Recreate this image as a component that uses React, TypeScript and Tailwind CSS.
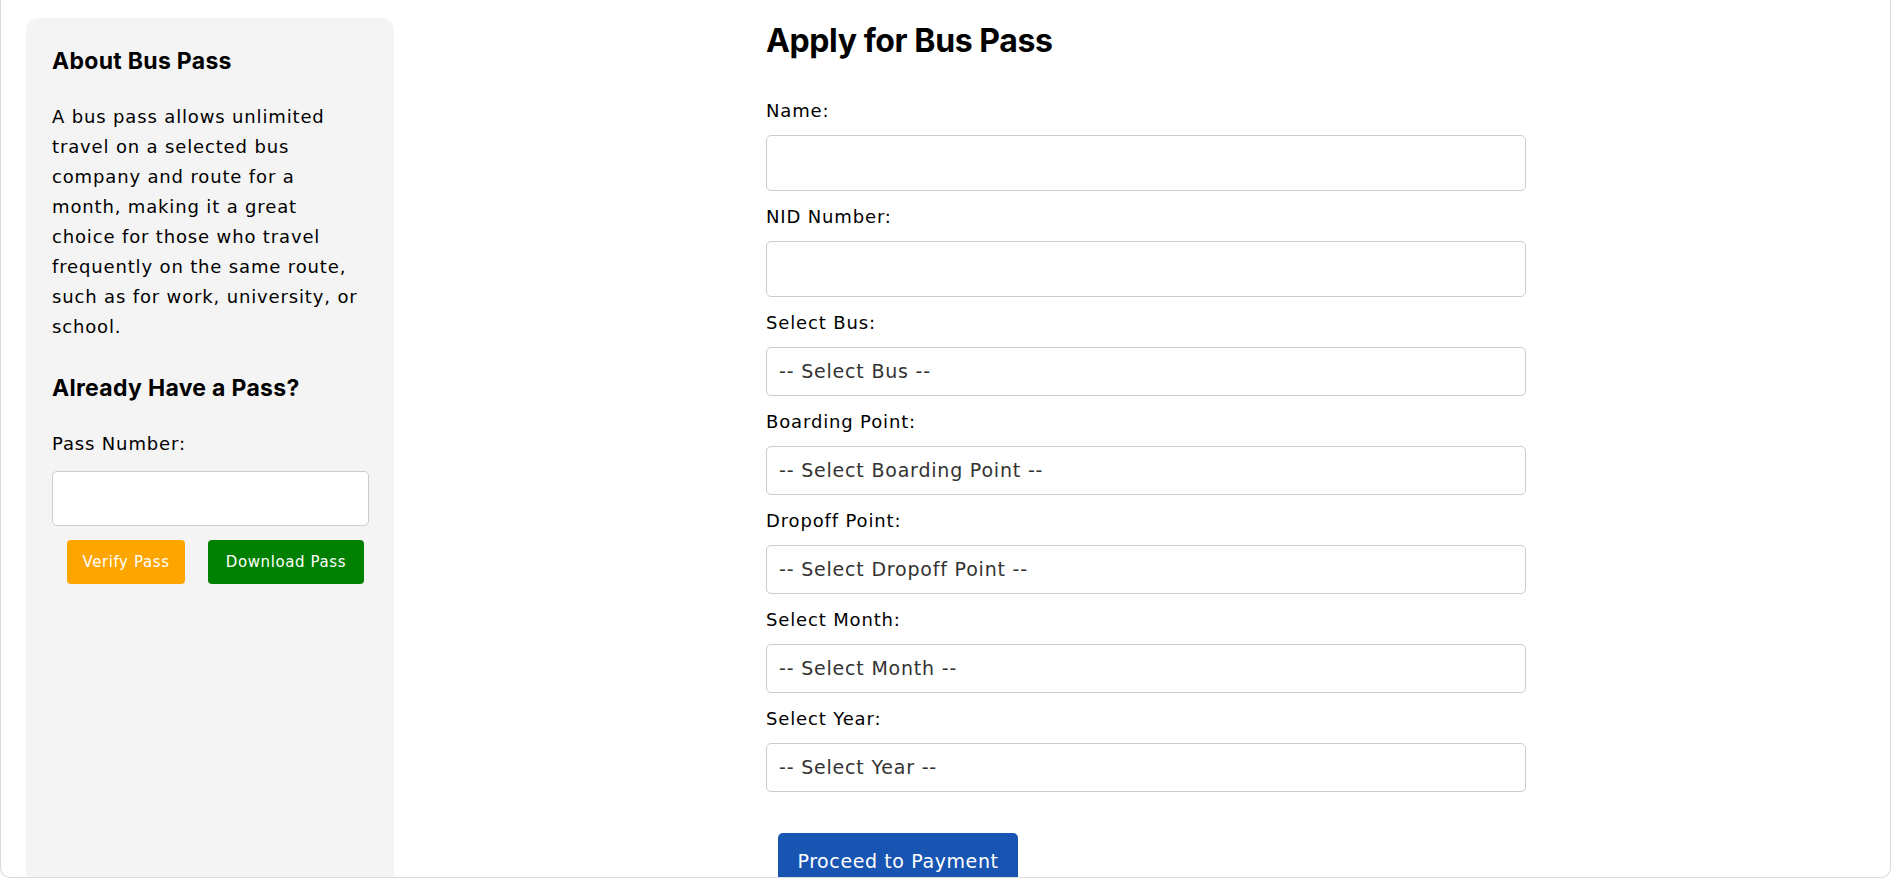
import { useState } from "react";

const fields = [
  { label: "Name:", type: "input" },
  { label: "NID Number:", type: "input" },
  { label: "Select Bus:", type: "select", placeholder: "-- Select Bus --" },
  { label: "Boarding Point:", type: "select", placeholder: "-- Select Boarding Point --" },
  { label: "Dropoff Point:", type: "select", placeholder: "-- Select Dropoff Point --" },
  { label: "Select Month:", type: "select", placeholder: "-- Select Month --" },
  { label: "Select Year:", type: "select", placeholder: "-- Select Year --" },
];

export default function App() {
  const [passNo, setPassNo] = useState("");

  return (
    <div className="w-full h-[880px] bg-white font-['DejaVu_Sans',sans-serif] text-black">
      <div className="h-[878px] border-x border-b border-[#dcdcdc] rounded-b-[10px] overflow-hidden flex">
        {/* --- Sidebar --- */}
        <aside className="w-[368px] shrink-0 ml-[25px] mt-[18px] bg-[#f4f4f4] rounded-t-[12px] pl-[26px] pr-[25px] pt-[28px]">
          <h3 className="font-['Inter',sans-serif] text-[23px] leading-[30px] font-bold tracking-[0.3px]">About Bus Pass</h3>
          <p className="mt-[26px] w-[310px] text-[18px] leading-[30px] tracking-[0.85px]">
            A bus pass allows unlimited travel on a selected bus company and route for a month, making it a great
            choice for those who travel frequently on the same route, such as for work, university, or school.
          </p>

          <h3 className="mt-[31px] font-['Inter',sans-serif] text-[23px] leading-[30px] font-bold tracking-[0.3px]">
            Already Have a Pass?
          </h3>
          <label className="block mt-[27px] text-[18px] leading-[27px] tracking-[0.85px]">Pass Number:</label>
          <input
            value={passNo}
            onChange={(e) => setPassNo(e.target.value)}
            className="block mt-[14px] w-full h-[55px] bg-white border border-[#cccccc] rounded-[5px] px-3 text-[18px] outline-none"
          />
          <div className="flex mt-[14px] pl-[15px] gap-[23px]">
            <button className="w-[118px] h-[44px] bg-[#ffa500] text-white text-[15px] tracking-[0.6px] rounded-[4px]">
              Verify Pass
            </button>
            <button className="w-[156px] h-[44px] bg-[#008000] text-white text-[15px] tracking-[0.6px] rounded-[4px]">
              Download Pass
            </button>
          </div>
        </aside>

        {/* --- Form --- */}
        <main className="flex-1 flex justify-center pl-[8px]">
          <div className="w-[760px] pt-[21px]">
            <h2 className="font-['Inter',sans-serif] text-[32px] leading-[40px] font-bold tracking-[-0.4px] mb-[36px]">
              Apply for Bus Pass
            </h2>

            {fields.map((f) => (
              <div key={f.label} className="mb-[12px]">
                <label className="block text-[18px] leading-[27px] tracking-[0.85px] mb-[11px]">{f.label}</label>
                {f.type === "input" ? (
                  <input className="block w-full h-[56px] border border-[#cccccc] rounded-[5px] px-3 text-[18px] outline-none" />
                ) : (
                  <div className="w-full h-[49px] border border-[#cccccc] rounded-[5px] pl-[12px] flex items-center text-[19px] tracking-[0.8px] text-[#333333]">
                    {f.placeholder}
                  </div>
                )}
              </div>
            ))}

            <button className="mt-[29px] ml-[12px] w-[240px] h-[56px] bg-[#1854b1] text-white text-[19px] tracking-[0.6px] rounded-[5px]">
              Proceed to Payment
            </button>
          </div>
        </main>
      </div>
    </div>
  );
}
